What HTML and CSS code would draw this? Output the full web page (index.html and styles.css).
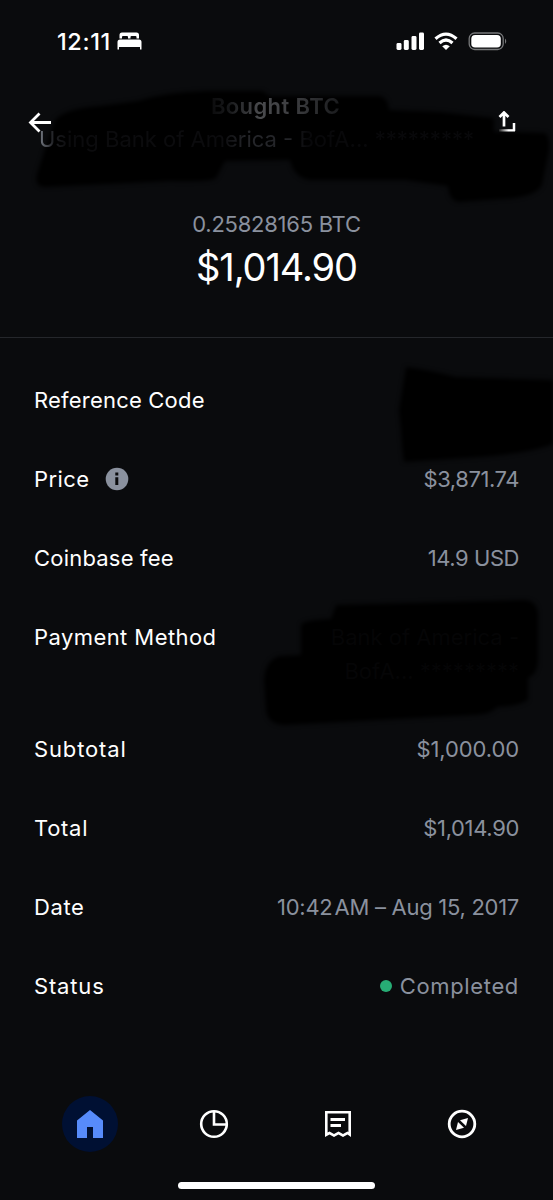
FILE: index.html
```html
<!DOCTYPE html>
<html lang="en">
<head>
<meta charset="utf-8">
<title>Bought BTC</title>
<link rel="stylesheet" href="styles.css">
</head>
<body>
<div class="screen">
  <header class="statusbar">
    <div class="clock"><span class="time">12:11</span>
      <svg class="bed" width="25" height="18" viewBox="0 0 25 18"><path fill="#fff" d="M2.5 6.5V3Q2.5 .5 5 .5H19.500Q22 .5 22 3V6.500H19.500V5Q19.500 4 18.500 4H14.500Q13.500 4 13.500 5V6.500H11V5Q11 4 10 4H6Q5 4 5 5V6.500ZM.5 17.500V10Q.5 7.500 3 7.500H22Q24.500 7.500 24.500 10V17.500H23V15H2V17.500Z"/></svg>
    </div>
    <svg class="signals" width="112" height="20" viewBox="0 0 112 20">
      <g fill="#fff"><rect x="0.500" y="11" width="5" height="7" rx="1.400"/><rect x="7.800" y="8" width="5" height="10" rx="1.400"/><rect x="15.500" y="4" width="5" height="14" rx="1.400"/><rect x="23" y="0.500" width="5" height="17.500" rx="1.400"/><path d="M46.200 14.200Q50 11.200 53.800 14.200L50 18Z"/></g>
      <g fill="none" stroke="#fff" stroke-width="3.200"><path d="M39.500 6.800Q50 -2.600 60.500 6.800"/><path d="M43.500 11Q50 5 56.500 11"/></g>
      <rect x="73.200" y="1" width="34" height="16.500" rx="5.500" fill="none" stroke="#77787a" stroke-width="1.300"/>
      <rect x="75.300" y="3" width="29.500" height="12.500" rx="3.800" fill="#fff"/>
      <path d="M109 6.500Q111.500 9.200 109 12Z" fill="#77787a"/>
    </svg>
  </header>

  <section class="heading">
    <svg class="scribble scribble-head" width="553" height="130" viewBox="0 80 553 130"><path d="M55 120Q66 108 100 106L138 101Q165 92 208 91H262L270 96H380Q388 98 389 110L440 112 494 118V132H512L545 133Q550 136 549 150L542 185Q535 198 500 199L458 202Q449 200 448 186L405 180H310Q294 178 290 160L225 161 216 178Q212 182 170 181L45 187Q34 187 37 174L46 146Z"/></svg>
    <svg class="back" width="24" height="22" viewBox="0 0 24 22"><path d="M11.500 1.500 2.500 10.500 11.500 19.500M2 10.500H23" fill="none" stroke="#fff" stroke-width="2.800"/></svg>
    <div class="titles">
      <h1 class="title">Bought BTC</h1>
      <p class="subtitle">Using Bank of America - BofA... *********</p>
    </div>
    <svg class="share" width="22" height="22" viewBox="0 0 22 22"><path d="M10 15.500V2M5.500 6 10 1.500 14.500 6" fill="none" stroke="#fff" stroke-width="2.700"/><path d="M20 12V20" stroke="#fff" stroke-width="2.500"/><rect x="5" y="18.200" width="16" height="2.300" fill="url(#fade)"/><defs><linearGradient id="fade"><stop stop-color="#222"/><stop offset=".6" stop-color="#fff"/></linearGradient></defs></svg>
  </section>

  <section class="amounts">
    <p class="crypto">0.25828165 BTC</p>
    <p class="fiat">$1,014.90</p>
  </section>

  <main class="details">
    <div class="row"><span class="label w-ref">Reference Code</span><svg class="scribble scribble-code" width="163" height="108" viewBox="390 360 163 108"><path d="M406 367Q430 370 456 377L553 380V444Q530 453 480 457L404 462Q402 450 401 430L399 410Z"/></svg></div>
    <div class="row"><span class="label w-price">Price</span><svg class="info" width="24" height="24" viewBox="0 0 24 24"><circle cx="12" cy="12" r="11.300" fill="#8a919e"/><path d="M10.300 5.500H13.300V8.500H10.300ZM10.300 10.200H13.300V18H10.300Z" fill="#0a0b0d"/></svg><span class="value v-price">$3,871.74</span></div>
    <div class="row"><span class="label w-fee">Coinbase fee</span><span class="value v-fee">14.9 USD</span></div>
    <div class="row tall"><span class="label w-pay">Payment Method</span><svg class="scribble scribble-pay" width="293" height="140" viewBox="260 593 293 140"><path d="M336 605 525 600Q537 601 538 614V660Q538 674 528 678V700Q520 706 497 707 492 714 475 715L285 725Q268 725 266 710L264 680Q265 660 280 656L301 655V625Q303 620 331 619Z"/></svg><span class="value hidden-value">Bank of America -<br>BofA... *********</span></div>
    <div class="row"><span class="label w-sub">Subtotal</span><span class="value v-sub">$1,000.00</span></div>
    <div class="row"><span class="label w-total">Total</span><span class="value v-total">$1,014.90</span></div>
    <div class="row"><span class="label w-date">Date</span><span class="value v-date">10:42<span class="am">AM</span> – Aug 15, 2017</span></div>
    <div class="row"><span class="label w-status">Status</span><span class="value v-status"><i class="dot"></i>Completed</span></div>
  </main>

  <nav class="tabs">
    <a class="tab active"><svg width="28" height="30" viewBox="0 0 28 30"><path d="M1 11.500 14 1 27 11.500V29H17V18H11V29H1Z" fill="#578bfa"/></svg></a>
    <a class="tab"><svg width="30" height="30" viewBox="0 0 30 30"><g fill="none" stroke="#fff" stroke-width="2.600"><circle cx="15" cy="15" r="12.800"/><path d="M15 2V15.500H28"/></g></svg></a>
    <a class="tab"><svg width="28" height="30" viewBox="0 0 28 30"><path d="M1 2H27V28L23.500 25.500 19 28 14.500 25.500 10 28 5.500 25.500 1 28ZM3.600 4.600V23.500L5.500 22.500 10 25 14.500 22.500 19 25 23.500 22.500 24.400 23V4.600Z" fill="#fff" fill-rule="evenodd"/><path d="M6.500 10.500H21M6.500 16.500H17" stroke="#fff" stroke-width="2.800"/></svg></a>
    <a class="tab"><svg width="30" height="30" viewBox="0 0 30 30"><circle cx="15" cy="15" r="12.800" fill="none" stroke="#fff" stroke-width="2.800"/><path d="M21 9 19 17 13 11.200ZM9 21 11 13 17 18.800Z" fill="#fff"/></svg></a>
  </nav>
  <div class="home-bar"></div>
</div>
</body>
</html>
```
FILE: styles.css
```css
* { box-sizing: border-box; }
body { margin: 0; background: #0a0b0d; color: #fff; font-family: Inter, "Liberation Sans", sans-serif; }
h1, p { margin: 0; }
.screen { width: 553px; height: 1200px; overflow: hidden; display: flex; flex-direction: column; background: #0a0b0d; }
.statusbar { height: 80px; padding: 32px 45px 0 57px; display: flex; justify-content: space-between; align-items: flex-start; }
.clock { display: flex; gap: 6px; }
.time { font-size: 23.5px; line-height: 20px; font-weight: 500; letter-spacing: 0.6px; }
.signals { display: block; }
.heading { position: relative; height: 130px; padding: 0 37px 0 28px; display: flex; align-items: flex-start; }
.scribble { position: absolute; fill: #000; filter: blur(2px); }
.scribble-head { left: 0; top: 0; }
.back { position: relative; flex: none; margin-top: 32px; }
.share { position: relative; flex: none; margin-top: 31px; }
.titles { position: relative; flex: 1; min-width: 0; height: 80px; padding-top: 10px; text-align: center; white-space: nowrap; }
.title { padding-left: 5px; font-size: 22px; line-height: 32px; font-weight: 600; letter-spacing: 0.4px; color: transparent; background: linear-gradient(90deg, #0c0c0d 36%, #17181a 40%, #4a4b4e 47%, #3b3c3f 55%, #17181a 66%); -webkit-background-clip: text; background-clip: text; }
.subtitle { margin-left: -13px; width: 480px; text-align: left; font-size: 22px; line-height: 35px; color: transparent; background: linear-gradient(90deg, #777c85 0, #202125 3%, #0b0b0d 6%, #0b0b0d 38%, #242529 43%, #242529 52%, #08080a 56%); -webkit-background-clip: text; background-clip: text; }
.amounts { height: 128px; border-bottom: 1px solid #25272b; text-align: center; white-space: nowrap; }
.crypto { font-size: 22px; line-height: 29px; letter-spacing: -0.25px; color: #8a919e; }
.fiat { font-size: 38px; line-height: 57px; letter-spacing: -1.1px; }
.details { height: 734px; padding: 22px 34px 0; font-size: 22px; }
.row { position: relative; height: 79px; display: flex; align-items: center; white-space: nowrap; }
.row.tall { height: 112.5px; align-items: flex-start; padding-top: 23px; line-height: 34px; }
.value { margin-left: auto; position: relative; color: #8a919e; text-align: right; }
.info { margin-left: 16px; }
.w-ref { letter-spacing: 0.2px; }
.w-price { letter-spacing: 0.4px; }
.w-fee { letter-spacing: 0.2px; }
.w-pay { letter-spacing: 0.43px; }
.w-sub { letter-spacing: 0.85px; }
.w-total { letter-spacing: 0.7px; }
.w-date { letter-spacing: 0.6px; }
.w-status { letter-spacing: 0.85px; }
.v-price, .v-fee { letter-spacing: -0.45px; }
.v-sub { letter-spacing: -0.1px; }
.v-total { letter-spacing: -0.35px; }
.v-date { letter-spacing: -0.28px; }
.v-status { letter-spacing: 0.65px; }
.scribble-code { right: -34px; top: 0; }
.scribble-pay { right: -34px; top: -4px; }
.hidden-value { color: #050506; }
.dot { display: inline-block; width: 12px; height: 12px; margin-right: 8px; border-radius: 50%; background: #27ad75; vertical-align: 2px; }
.am { margin-left: 2px; }
.tabs { height: 108px; padding: 24px 28px 0; display: grid; grid-template-columns: repeat(4, 124px); }
.tab { width: 56px; height: 56px; margin-left: 34px; border-radius: 50%; display: flex; align-items: center; justify-content: center; }
.active { background: #001033; }
.home-bar { width: 197px; height: 7px; margin: 2px auto 0; border-radius: 4px; background: #fff; }
```
